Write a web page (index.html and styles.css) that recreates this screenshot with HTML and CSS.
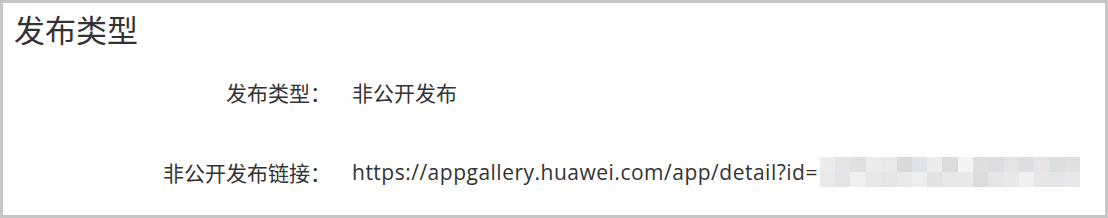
FILE: index.html
```html
<!DOCTYPE html>
<html lang="zh-CN">

<head>
  <meta charset="UTF-8">
  <title>发布类型</title>
  <link rel="stylesheet" href="styles.css">
</head>

<body>
  <div class="panel">
    <h2 class="panel-title">发布类型</h2>
    <div class="info-list">
      <div class="info-row">
        <div class="info-label">发布类型：</div>
        <div class="info-value">非公开发布</div>
      </div>
      <div class="info-row">
        <div class="info-label">非公开发布链接：</div>
        <div class="info-value">
          <span class="link-text">https://appgallery.huawei.com/app/detail?id=</span><span class="masked"></span>
        </div>
      </div>
    </div>
  </div>
</body>

</html>
```

FILE: styles.css
```css
body {
  margin: 0;
  font-family: 'Open Sans', 'Noto Sans CJK SC', sans-serif;
  background: white;
  color: #333;
}

.panel {
  width: 1108px;
  height: 218px;
  box-sizing: border-box;
  border: 3px solid #c6c6c6;
  padding: 5px 10px 0 11px;
}

.panel-title {
  margin: 0;
  font-family: 'Noto Sans CJK SC', sans-serif;
  font-size: 31px;
  font-weight: normal;
  line-height: 42px;
  color: #333;
}

.info-list {
  margin-top: 27px;
  display: flex;
  flex-direction: column;
  gap: 50px;
}

.info-row {
  display: flex;
  align-items: center;
  font-size: 21px;
  line-height: 30px;
}

.info-label {
  width: 317px;
  text-align: right;
  font-family: 'Noto Sans CJK SC', sans-serif;
}

.info-value {
  margin-left: 21px;
  display: flex;
  align-items: center;
  font-family: 'Noto Sans CJK SC', sans-serif;
}

.link-text {
  font-family: 'Open Sans', sans-serif;
  letter-spacing: 0.5px;
}

.masked {
  display: inline-block;
  width: 260px;
  height: 30px;
  margin-left: 2px;
  background:
    linear-gradient(to right,
      #ececec 0 15px, #e3e4e5 15px 30px, #dfe0e0 30px 46px, #ebecec 46px 61px,
      #e8eaeb 61px 77px, #dcd8d5 77px 92px, #dfe2e6 92px 107px, #ececec 107px 122px,
      #dcdbdb 122px 138px, #f3f4f6 138px 153px, #e0dddc 153px 168px, #dcdde0 168px 184px,
      #e4e3e1 184px 199px, #dcdee2 199px 214px, #e5e4e2 214px 230px, #dcdde1 230px 245px,
      #dfe0e1 245px 260px) top / 100% 50% no-repeat,
    linear-gradient(to right,
      #e9e9e9 0 15px, #e3e5e5 15px 30px, #efefef 30px 46px, #e6e7e7 46px 61px,
      #e5e5e6 61px 77px, #e9e9e8 77px 92px, #eceded 92px 107px, #e2e2e6 107px 122px,
      #eae6e3 122px 138px, #e6e8eb 138px 153px, #dedad9 153px 168px, #e4e5e7 168px 184px,
      #e6e8ea 184px 199px, #eef0f3 199px 214px, #e5e6e7 214px 230px, #e5e6e9 230px 245px,
      #e6e8e7 245px 260px) bottom / 100% 50% no-repeat;
}
```
